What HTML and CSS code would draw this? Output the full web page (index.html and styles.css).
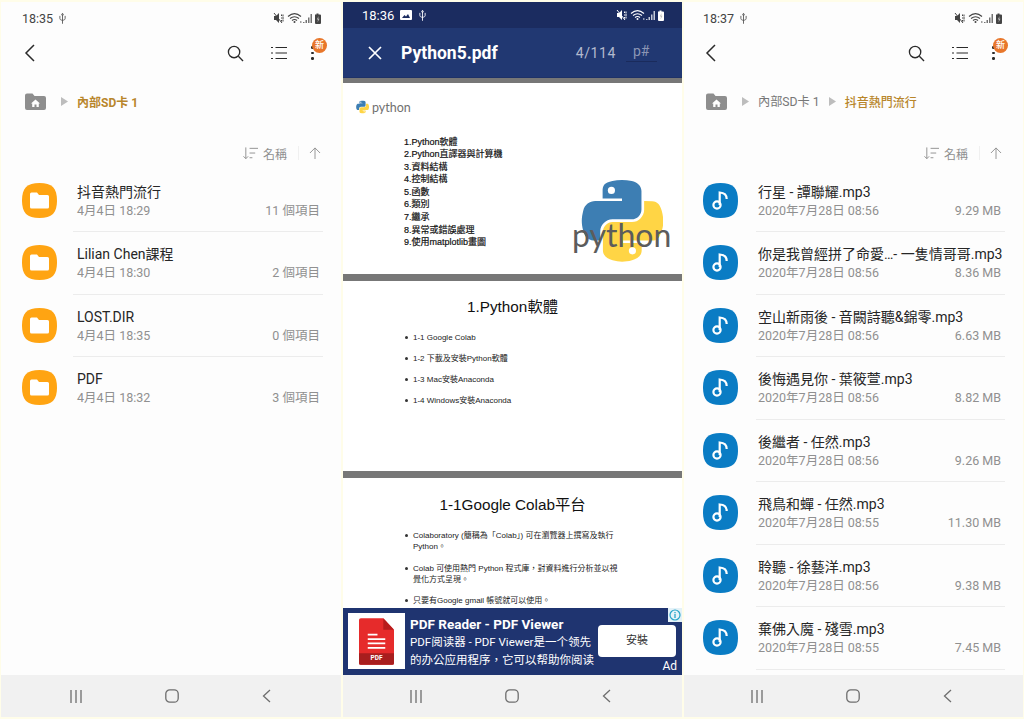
FILE: index.html
```html
<!DOCTYPE html>
<html lang="zh-Hant">
<head>
<meta charset="utf-8">
<title>Files and PDF viewer</title>
<link rel="stylesheet" href="styles.css">
</head>
<body>
<svg class="defs" xmlns="http://www.w3.org/2000/svg">
  <symbol id="usb" viewBox="0 0 8 12"><path d="M4 12V2M1 3v3c0 1 1 2 3 2s3-1 3-2V3M4 0 3 2h2z" fill="none" stroke="currentColor" stroke-width="1"/></symbol>
  <symbol id="status" viewBox="0 0 50 12">
    <path d="M1 4h2l3-3v10L3 8H1z" fill="currentColor"/>
    <path d="M1 1l8 10M8.500 2.500v1.500M10 2.500v2M8.500 8v1.500M10 7.500v2M8 6h3" fill="none" stroke="currentColor" stroke-width="1"/>
    <path d="M15 4.500c4-3.500 9-3.500 13 0M17 6.500c3-2.300 6-2.300 9 0M19 8.500c1.500-1.200 3.500-1.200 5 0" fill="none" stroke="currentColor" stroke-width="1.100"/>
    <circle cx="21.500" cy="10" r="1" fill="currentColor"/><path d="M27 10h1.500" stroke="currentColor"/>
    <path d="M30 10h1.500V11H30zM32.500 8H34v3h-1.500zM35 5.500h1.500V11H35zM37.500 2H39v9h-1.500z" fill="currentColor" opacity=".75"/>
    <path d="M42 2.500h1.500V1.500h2v1H47a1 1 0 0 1 1 1V11a1 1 0 0 1-1 1h-4a1 1 0 0 1-1-1z" fill="currentColor"/>
    <path d="M45.500 4 43.800 7.500h1.200l-.5 3 2-3.800h-1.200z" fill="#bbb"/>
  </symbol>
  <symbol id="back" viewBox="0 0 12 20"><path d="M10 2 2 10l8 8" fill="none" stroke="currentColor" stroke-width="1.500"/></symbol>
  <symbol id="search" viewBox="0 0 18 18"><circle cx="7.500" cy="7.500" r="6" fill="none" stroke="currentColor" stroke-width="1.400"/><path d="m12 12 5 5" stroke="currentColor" stroke-width="1.400"/></symbol>
  <symbol id="listview" viewBox="0 0 16 14"><path d="M0 1.500h2M0 7h2M0 12.500h2M4.500 1.500H16M4.500 7H16M4.500 12.500H16" stroke="currentColor" stroke-width="1.200"/></symbol>
  <symbol id="home" viewBox="0 0 21 17"><path d="M0 2.500A2 2 0 0 1 2 .5h5.500l2 2.500H19a2 2 0 0 1 2 2V15a2 2 0 0 1-2 2H2a2 2 0 0 1-2-2z" fill="#8e8e8e"/><path d="m10.500 6.500-4.500 4h1.200v3.500h2.300v-2.500h2V14h2.300v-3.500H15z" fill="#fff"/></symbol>
  <symbol id="tri" viewBox="0 0 7 9"><path d="m0 0 7 4.500L0 9z" fill="#bdbdbd"/></symbol>
  <symbol id="sort" viewBox="0 0 16 13"><path d="M3 0v12M0.500 9.500 3 12l2.500-2.500M7 1h9M7 6h6M7 11h3" fill="none" stroke="currentColor" stroke-width="1"/></symbol>
  <symbol id="up" viewBox="0 0 13 13"><path d="M6.500 13V1M1 6.500 6.500 1 12 6.500" fill="none" stroke="currentColor" stroke-width="1"/></symbol>
  <symbol id="folder" viewBox="0 0 35 35"><path d="M17.500 0C30 0 35 5 35 17.500S30 35 17.500 35 0 30 0 17.500 5 0 17.500 0z" fill="#ffa412"/><path d="M8 11a1.500 1.500 0 0 1 1.500-1.500h5.500l2 2.500h8.500A1.500 1.500 0 0 1 27 13.500V24a1.500 1.500 0 0 1-1.500 1.500h-16A1.500 1.500 0 0 1 8 24z" fill="#fff"/></symbol>
  <symbol id="music" viewBox="0 0 35 35"><path d="M17.500 0C30 0 35 5 35 17.500S30 35 17.500 35 0 30 0 17.500 5 0 17.500 0z" fill="#0a7cc4"/><circle cx="14" cy="22" r="3.600" fill="none" stroke="#fff" stroke-width="2.200"/><path d="M16.700 22V9.500c4 .2 7 2.300 7 6.500" fill="none" stroke="#fff" stroke-width="2.200"/></symbol>
  <symbol id="nav-bars" viewBox="0 0 12 13"><path d="M1 0v13M6 0v13M11 0v13" stroke="currentColor" stroke-width="1.300"/></symbol>
  <symbol id="nav-home" viewBox="0 0 14 14"><rect x=".8" y=".8" width="12.400" height="12.400" rx="4" fill="none" stroke="currentColor" stroke-width="1.300"/></symbol>
  <symbol id="nav-back" viewBox="0 0 9 14"><path d="M8 1 1.500 7 8 13" fill="none" stroke="currentColor" stroke-width="1.300"/></symbol>
  <symbol id="py-blue" viewBox="0 0 110 110"><path d="M54.900.1c-4.600 0-8.900.4-12.700 1.100C31 3.200 29 7.300 29 14.900v10h26v3.400H19.200C11.600 28.300 5 32.900 2.900 41.500c-2.400 9.900-2.500 16.100 0 26.400 1.800 7.700 6.300 13.200 13.900 13.200h9v-12c0-8.700 7.500-16.300 16.300-16.300h26c7.200 0 13-6 13-13.200V14.900c0-7.100-6-12.400-13-13.600C63.600.4 59.400.1 54.900.1z" fill="#3d7eb3"/><circle cx="40.800" cy="14" r="4.800" fill="#fff"/></symbol>
  <symbol id="py-yellow" viewBox="0 0 110 110"><path d="M84.700 28.300v11.600c0 9-7.600 16.600-16.300 16.600h-26c-7.100 0-13 6.100-13 13.200v24.800c0 7.100 6.200 11.200 13 13.200 8.200 2.400 16 2.800 26 0 6.500-1.900 13-5.700 13-13.200v-10H56.400v-3.300h39c7.600 0 10.400-5.300 13-13.200 2.700-8.200 2.700-16 0-26.400-1.900-7.500-5.500-13.200-13-13.200z" fill="#ffd545"/><circle cx="69" cy="95" r="4.800" fill="#fff"/></symbol>
</svg>

<main class="phones">

  <section class="phone phone-a">
    <div class="status">
      <span class="time">18:35</span>
      <svg class="ic-usb"><use href="#usb"/></svg>
      <svg class="ic-status"><use href="#status"/></svg>
    </div>
    <div class="toolbar">
      <svg class="ic-back"><use href="#back"/></svg>
      <svg class="ic-search"><use href="#search"/></svg>
      <svg class="ic-listview"><use href="#listview"/></svg>
      <span class="kebab"><i></i><i></i><i></i><b class="badge">新</b></span>
    </div>
    <nav class="crumbs">
      <svg class="ic-home"><use href="#home"/></svg>
      <svg class="ic-tri"><use href="#tri"/></svg>
      <span class="crumb-current crumb-strong">內部SD卡 1</span>
    </nav>
    <div class="sortbar">
      <svg class="ic-sort"><use href="#sort"/></svg>
      <span class="sort-name">名稱</span>
      <span class="sort-sep"></span>
      <svg class="ic-up"><use href="#up"/></svg>
    </div>
    <ul class="rows rows-short">
      <li class="row"><svg class="file-ic"><use href="#folder"/></svg><div class="row-body"><div class="row-title">抖音熱門流行</div><div class="row-meta"><span>4月4日 18:29</span><span>11 個項目</span></div></div></li>
      <li class="row"><svg class="file-ic"><use href="#folder"/></svg><div class="row-body"><div class="row-title">Lilian Chen課程</div><div class="row-meta"><span>4月4日 18:30</span><span>2 個項目</span></div></div></li>
      <li class="row"><svg class="file-ic"><use href="#folder"/></svg><div class="row-body"><div class="row-title">LOST.DIR</div><div class="row-meta"><span>4月4日 18:35</span><span>0 個項目</span></div></div></li>
      <li class="row"><svg class="file-ic"><use href="#folder"/></svg><div class="row-body"><div class="row-title">PDF</div><div class="row-meta"><span>4月4日 18:32</span><span>3 個項目</span></div></div></li>
    </ul>
    <div class="navbar">
      <svg class="nav-bars"><use href="#nav-bars"/></svg>
      <svg class="nav-home"><use href="#nav-home"/></svg>
      <svg class="nav-back"><use href="#nav-back"/></svg>
    </div>
  </section>

  <section class="phone phone-b">
    <div class="status status-dark">
      <span class="time">18:36</span>
      <svg class="ic-pic" viewBox="0 0 12 10"><path d="M0 1a1 1 0 0 1 1-1h10a1 1 0 0 1 1 1v8a1 1 0 0 1-1 1H1a1 1 0 0 1-1-1z" fill="#fff"/><path d="m2 8 2.500-3L6 6.500 8 4l2 4z" fill="#1b2c60"/></svg>
      <svg class="ic-usb"><use href="#usb"/></svg>
      <svg class="ic-status"><use href="#status"/></svg>
    </div>
    <header class="pdfbar">
      <svg class="ic-close" viewBox="0 0 14 14"><path d="m1 1 12 12M13 1 1 13" stroke="#fff" stroke-width="1.700"/></svg>
      <span class="pdf-title">Python5.pdf</span>
      <span class="pdf-count">4/114</span>
      <span class="pdf-input">p#</span>
    </header>
    <div class="doc">
      <article class="page page-toc">
        <div class="mini-logo">
          <svg class="mini-snake" viewBox="0 0 110 110"><use href="#py-blue"/><use href="#py-yellow"/></svg>
          <span class="mini-word">python</span>
        </div>
        <div class="toc-wrap">
          <ol class="toc">
            <li>1.Python軟體</li>
            <li>2.Python直譯器與計算機</li>
            <li>3.資料結構</li>
            <li>4.控制結構</li>
            <li>5.函數</li>
            <li>6.類別</li>
            <li>7.繼承</li>
            <li>8.異常或錯誤處理</li>
            <li>9.使用matplotlib畫圖</li>
          </ol>
          <div class="big-logo">
            <svg class="big-snake" viewBox="0 0 110 110"><use href="#py-blue"/><use href="#py-yellow"/></svg>
            <span class="big-word">python</span>
          </div>
        </div>
      </article>
      <article class="page page-two">
        <h2 class="slide-title">1.Python軟體</h2>
        <ul class="slide-list">
          <li>1-1 Google Colab</li>
          <li>1-2 下載及安裝Python軟體</li>
          <li>1-3 Mac安裝Anaconda</li>
          <li>1-4 Windows安裝Anaconda</li>
        </ul>
      </article>
      <article class="page page-three">
        <h2 class="slide-title">1-1Google Colab平台</h2>
        <ul class="slide-list slide-list-wrap">
          <li>Colaboratory (簡稱為「Colab」) 可在瀏覽器上撰寫及執行<br>Python。</li>
          <li>Colab 可使用熱門 Python 程式庫，對資料進行分析並以視<br>覺化方式呈現。</li>
          <li>只要有Google gmail 帳號就可以使用。</li>
        </ul>
      </article>
    </div>
    <aside class="ad">
      <div class="ad-thumb">
        <svg class="ad-pdf" viewBox="0 0 36 48"><path d="M2 0h23l11 12v34a2 2 0 0 1-2 2H2a2 2 0 0 1-2-2V2a2 2 0 0 1 2-2z" fill="#e62b2b"/><path d="M25 0l11 12H25z" fill="#b71c1c"/><path d="M0 36h36v10a2 2 0 0 1-2 2H2a2 2 0 0 1-2-2z" fill="#a81e1e"/><path d="M9 17h10M9 21.500h18M9 26h18M9 30.500h18" stroke="#fff" stroke-width="1.800"/></svg>
        <span class="ad-pdf-label">PDF</span>
      </div>
      <div class="ad-text">
        <div class="ad-title">PDF Reader - PDF Viewer</div>
        <div class="ad-line">PDF阅读器 - PDF Viewer是一个领先</div>
        <div class="ad-line">的办公应用程序，它可以帮助你阅读</div>
      </div>
      <div class="ad-side">
        <span class="ad-btn">安裝</span>
        <span class="ad-tag">Ad</span>
      </div>
      <svg class="ad-info" viewBox="0 0 14 14"><rect width="14" height="14" fill="#e4f2f8"/><circle cx="7" cy="7" r="5" fill="none" stroke="#27a5c9" stroke-width="1.200"/><path d="M7 6v4M7 4v1.200" stroke="#27a5c9" stroke-width="1.300"/></svg>
    </aside>
    <div class="navbar">
      <svg class="nav-bars"><use href="#nav-bars"/></svg>
      <svg class="nav-home"><use href="#nav-home"/></svg>
      <svg class="nav-back"><use href="#nav-back"/></svg>
    </div>
  </section>

  <section class="phone phone-c">
    <div class="status">
      <span class="time">18:37</span>
      <svg class="ic-usb"><use href="#usb"/></svg>
      <svg class="ic-status"><use href="#status"/></svg>
    </div>
    <div class="toolbar">
      <svg class="ic-back"><use href="#back"/></svg>
      <svg class="ic-search"><use href="#search"/></svg>
      <svg class="ic-listview"><use href="#listview"/></svg>
      <span class="kebab"><i></i><i></i><i></i><b class="badge">新</b></span>
    </div>
    <nav class="crumbs">
      <svg class="ic-home"><use href="#home"/></svg>
      <svg class="ic-tri"><use href="#tri"/></svg>
      <span class="crumb-parent">內部SD卡 1</span>
      <svg class="ic-tri"><use href="#tri"/></svg>
      <span class="crumb-current">抖音熱門流行</span>
    </nav>
    <div class="sortbar">
      <svg class="ic-sort"><use href="#sort"/></svg>
      <span class="sort-name">名稱</span>
      <span class="sort-sep"></span>
      <svg class="ic-up"><use href="#up"/></svg>
    </div>
    <ul class="rows">
      <li class="row"><svg class="file-ic"><use href="#music"/></svg><div class="row-body"><div class="row-title">行星 - 譚聯耀.mp3</div><div class="row-meta"><span>2020年7月28日 08:56</span><span>9.29 MB</span></div></div></li>
      <li class="row"><svg class="file-ic"><use href="#music"/></svg><div class="row-body"><div class="row-title">你是我曾經拼了命愛…- 一隻情哥哥.mp3</div><div class="row-meta"><span>2020年7月28日 08:56</span><span>8.36 MB</span></div></div></li>
      <li class="row"><svg class="file-ic"><use href="#music"/></svg><div class="row-body"><div class="row-title">空山新雨後 - 音闕詩聽&amp;錦零.mp3</div><div class="row-meta"><span>2020年7月28日 08:56</span><span>6.63 MB</span></div></div></li>
      <li class="row"><svg class="file-ic"><use href="#music"/></svg><div class="row-body"><div class="row-title">後悔遇見你 - 葉筱萱.mp3</div><div class="row-meta"><span>2020年7月28日 08:56</span><span>8.82 MB</span></div></div></li>
      <li class="row"><svg class="file-ic"><use href="#music"/></svg><div class="row-body"><div class="row-title">後繼者 - 任然.mp3</div><div class="row-meta"><span>2020年7月28日 08:56</span><span>9.26 MB</span></div></div></li>
      <li class="row"><svg class="file-ic"><use href="#music"/></svg><div class="row-body"><div class="row-title">飛鳥和蟬 - 任然.mp3</div><div class="row-meta"><span>2020年7月28日 08:55</span><span>11.30 MB</span></div></div></li>
      <li class="row"><svg class="file-ic"><use href="#music"/></svg><div class="row-body"><div class="row-title">聆聽 - 徐藝洋.mp3</div><div class="row-meta"><span>2020年7月28日 08:56</span><span>9.38 MB</span></div></div></li>
      <li class="row"><svg class="file-ic"><use href="#music"/></svg><div class="row-body"><div class="row-title">棄佛入魔 - 殘雪.mp3</div><div class="row-meta"><span>2020年7月28日 08:55</span><span>7.45 MB</span></div></div></li>
    </ul>
    <div class="navbar">
      <svg class="nav-bars"><use href="#nav-bars"/></svg>
      <svg class="nav-home"><use href="#nav-home"/></svg>
      <svg class="nav-back"><use href="#nav-back"/></svg>
    </div>
  </section>

</main>
</body>
</html>
```

FILE: styles.css
```css
* { box-sizing: border-box; }
html, body { margin: 0; height: 719px; overflow: hidden; }
body {
  background: #fffde9;
  font-family: Roboto, "Noto Sans CJK TC", sans-serif;
  color: #333;
}
.defs { display: none; }

.phones {
  display: flex;
  height: 719px;
  padding: 2px 1px;
  gap: 2px;
}
.phone {
  min-width: 0;
  height: 715px;
  display: flex;
  flex-direction: column;
  background: #fdfdfd;
  --left: 21px;
  --right: 21px;
  --nav-shift: 2px;
}
.phone-a { flex: none; width: 340px; }
.phone-b { flex: none; width: 339px; --left: 19px; --right: 19px; --nav-shift: 4px; background: #fff; }
.phone-c { flex: 1 1 0; --left: 19px; --right: 22px; --nav-shift: 4px; }

/* status */
.status {
  height: 32px;
  flex: none;
  display: flex;
  align-items: center;
  padding: 0 calc(var(--right) - 3px) 0 var(--left);
  color: #444;
}
.time { font-size: 12.500px; }
.ic-usb { width: 7px; height: 11px; margin-left: 6px; color: #555; }
.ic-status { width: 50px; height: 12px; margin-left: auto; color: #444; }
.status-dark { background: #1b2c60; color: #fff; height: 26px; }
.status-dark .ic-usb, .status-dark .ic-status { color: #fff; }
.status-dark .time { font-size: 13px; }
.ic-pic { width: 12px; height: 10px; margin-left: 6px; }
.status-dark .ic-usb { margin-left: 7px; }

/* toolbar */
.toolbar {
  height: 38px;
  flex: none;
  display: flex;
  align-items: center;
  padding: 0 var(--right) 0 calc(var(--left) + 2px);
  color: #2a2a2a;
}
.ic-back { width: 12px; height: 20px; }
.ic-search { width: 17px; height: 17px; margin-left: auto; }
.ic-listview { width: 16px; height: 14px; margin-left: 27px; }
.kebab {
  position: relative;
  display: flex;
  flex-direction: column;
  gap: 3px;
  width: 2px;
  margin: 0 7px 0 24px;
}
.kebab i { width: 2.500px; height: 2.500px; background: #2a2a2a; border-radius: 50%; }
.badge {
  position: absolute;
  left: 1px;
  top: -8px;
  width: 15px;
  height: 15px;
  border-radius: 50%;
  background: #e8772b;
  color: #fff;
  font-size: 9px;
  font-weight: 500;
  line-height: 15px;
  text-align: center;
}

/* breadcrumbs */
.crumbs {
  height: 60px;
  flex: none;
  display: flex;
  align-items: center;
  padding: 0 0 2px calc(var(--left) + 3px);
}
.ic-home { width: 21px; height: 17px; margin-right: 15px; }
.ic-tri { width: 7px; height: 9px; margin-right: 9px; }
.crumb-current { font-size: 12px; font-weight: 500; color: #b8862b; }
.crumb-strong { font-weight: 700; }
.crumb-parent { font-size: 12.200px; color: #777; margin-right: 9px; }

/* sort bar */
.sortbar {
  height: 37.500px;
  flex: none;
  display: flex;
  align-items: center;
  justify-content: flex-end;
  padding: 5px calc(var(--right) - 1px) 0 0;
  color: #8f8f8f;
}
.ic-sort { width: 15px; height: 13px; }
.sort-name { font-size: 12px; margin-left: 5px; }
.sort-sep { width: 1px; height: 14px; background: #f0f0f0; margin: 0 10px 0 11px; }
.ic-up { width: 12px; height: 12px; }

/* file rows */
.rows {
  flex: 1 1 0;
  min-height: 0;
  margin: 0;
  padding: 0;
  list-style: none;
  overflow: hidden;
}
.row {
  height: 62.500px;
  display: flex;
  align-items: flex-start;
  padding: 13px 0 0 var(--left);
  position: relative;
}
.row::after {
  content: "";
  position: absolute;
  left: 72px;
  right: 18px;
  bottom: 0;
  height: 1px;
  background: #ececec;
}
.rows-short .row:last-child::after { display: none; }
.file-ic { width: 35px; height: 35px; flex: none; }
.row-body {
  flex: 1;
  min-width: 0;
  margin: -1px 0 0 20px;
  padding: 0 var(--right) 0 0;
}
.row-title { font-size: 14px; line-height: 20px; color: #262626; white-space: nowrap; }
.row-meta {
  display: flex;
  justify-content: space-between;
  font-size: 12.500px;
  line-height: 18px;
  color: #909090;
}

/* nav */
.navbar {
  height: 42px;
  flex: none;
  display: flex;
  align-items: center;
  justify-content: center;
  gap: 83px;
  background: #f1f1f1;
  color: #6e6e6e;
  padding-right: var(--nav-shift);
}
.nav-bars { width: 12px; height: 13px; }
.nav-home { width: 14px; height: 14px; }
.nav-back { width: 9px; height: 14px; }

/* PDF */
.pdfbar {
  height: 50px;
  flex: none;
  display: flex;
  align-items: center;
  background: #213872;
  padding-left: 25px;
  border-bottom: 1px solid #1e3268;
}
.ic-close { width: 14px; height: 14px; }
.pdf-title { font-size: 17.500px; font-weight: 700; color: #fff; margin-left: 19px; }
.pdf-count { font-size: 14px; letter-spacing: .6px; color: #b3bace; margin-left: auto; }
.pdf-input {
  width: 31px;
  margin: 0 25px 0 10px;
  padding: 0 0 2px 7px;
  font-size: 14px;
  color: #8c96b5;
  border-bottom: 1px solid #1a2b5c;
}
.doc {
  flex: 1 1 0;
  min-height: 0;
  overflow: hidden;
  background: #fff;
  color: #222;
  font-family: "Liberation Sans", "Noto Sans CJK TC", sans-serif;
}
.page { border-top: 7px solid #777; }
.page-toc { height: 196px; border-top-width: 5px; padding: 14px 14px 0 13px; }
.page-two { height: 197px; }
.page-three { height: 200px; }

.mini-logo { display: flex; align-items: center; gap: 3px; height: 20px; }
.mini-snake { width: 13px; height: 14px; }
.mini-word { font-family: Lato, sans-serif; font-size: 12.500px; color: #707070; }

.toc-wrap { display: flex; margin-top: 5px; }
.toc {
  list-style: none;
  margin: 13.500px 0 0 48px;
  padding: 0;
  font-size: 9px;
  line-height: 12.600px;
  color: #111;
  -webkit-text-stroke: .2px #111;
  flex: 1;
}
.big-logo { position: relative; width: 96px; height: 84px; margin-top: 58px; flex: none; }
.big-snake { display: block; width: 82px; height: 82px; margin-left: 9px; }
.big-word {
  position: absolute;
  left: 0;
  top: 35px;
  font-family: Lato, sans-serif;
  font-size: 32px;
  line-height: 40px;
  color: #5c5c5c;
}

.slide-title {
  margin: 0;
  padding-top: 16px;
  font-size: 15.300px;
  line-height: 20px;
  font-weight: 400;
  text-align: center;
  color: #111;
}
.page-three .slide-title { padding-top: 17px; }
.slide-list {
  margin: 15px 0 0;
  padding: 0 0 0 62px;
  list-style: none;
  font-size: 8px;
  line-height: 11px;
  color: #222;
}
.slide-list li { margin-bottom: 10px; padding-left: 8px; text-indent: -8px; }
.slide-list li::before {
  content: "";
  display: inline-block;
  width: 3px;
  height: 3px;
  margin: 0 5px 1px 0;
  border-radius: 50%;
  background: #333;
}
.slide-list-wrap { margin-top: 15px; }
.slide-list-wrap li { margin-bottom: 10px; line-height: 11.300px; }

/* ad */
.ad {
  position: relative;
  height: 67px;
  flex: none;
  display: flex;
  background: #1f3470;
  color: #fff;
  padding: 5px 6px 0 5px;
}
.ad-thumb {
  position: relative;
  width: 57px;
  height: 56px;
  flex: none;
  background: #fff;
  display: flex;
  align-items: center;
  justify-content: center;
}
.ad-pdf { width: 35px; height: 47px; }
.ad-pdf-label {
  position: absolute;
  left: 0;
  right: 0;
  bottom: 7px;
  text-align: center;
  font-size: 6.500px;
  font-weight: 700;
  color: #fff;
}
.ad-text { margin-left: 5px; flex: 1; min-width: 0; font-family: Roboto, "Noto Sans CJK SC", sans-serif; }
.ad-title { font-size: 13.500px; font-weight: 700; line-height: 18px; margin-top: 2px; white-space: nowrap; }
.ad-line { font-size: 11.500px; line-height: 18px; white-space: nowrap; }
.ad-side { width: 78px; flex: none; display: flex; flex-direction: column; align-items: flex-end; padding-top: 12px; }
.ad-btn {
  width: 78px;
  height: 32px;
  background: #fff;
  border-radius: 4px;
  color: #333;
  font-size: 11px;
  line-height: 32px;
  text-align: center;
}
.ad-tag { font-size: 12px; line-height: 14px; margin-top: 2px; margin-right: -1px; }
.ad-info { position: absolute; right: 0; top: 0; width: 14px; height: 14px; }
```
